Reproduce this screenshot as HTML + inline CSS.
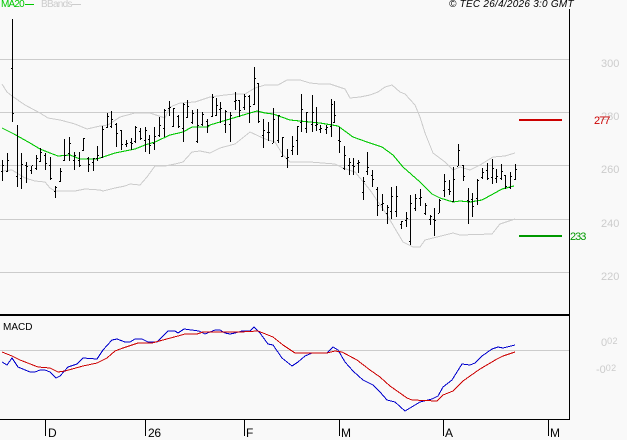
<!DOCTYPE html>
<html><head><meta charset="utf-8"><style>
html,body{margin:0;padding:0;background:#f9f9f9}
#c{position:relative;width:627px;height:440px;overflow:hidden;background:#f9f9f9;font-family:"Liberation Sans",sans-serif}
svg{position:absolute;left:0;top:0}
.t{position:absolute;font-size:11px;line-height:11px;white-space:nowrap}
.g{color:#ccc}
.k{color:#000}
.x{font-size:12px;letter-spacing:-.3px}
.s{position:relative;top:-2px;font-size:9px;letter-spacing:.4px}
</style></head><body><div id="c">
<svg width="627" height="440" shape-rendering="crispEdges" fill="none">
<path stroke="#ccc" d="M0 59.5H569M0 112.5H569M0 165.5H569M0 219.5H569M0 272.5H569M0 350.5H569"/>
<polyline stroke="#ccc" points="2,84 7,92 12,96 25,105 40,113 48,118 60,120 75,124 87,129 100,126 108,125 120,117 135,113 150,113 165,118 170,107 180,103 195,102 210,97 225,95 235,94 245,94 255,88 265,85 278,85 287,80 300,80 310,83 320,84 330,84 345,89 350,98 360,97 370,95 378,92 385,87 392,85 400,92 405,94 415,105 420,117 425,133 433,153 445,162 453,170 460,167 470,170 480,165 493,157 505,156 515,153"/>
<polyline stroke="#ccc" points="2,171 12,170 25,178 35,181 45,182 50,188 55,191 60,191 75,191 85,189 100,190 103,191 115,188 125,186 130,184 140,185 147,177 155,166 165,166 175,164 183,162 192,152 200,151 210,153 220,148 235,144 250,132 265,139 275,142 283,155 290,162 310,162 335,164 343,168 355,172 370,190 387,215 403,242 413,247 420,247 425,240 453,233 460,235 492,234 500,224 515,219"/>
<polyline stroke="#00c800" stroke-width="1.1" points="2,128 14,134 30,143 40,149 50,153 58,156 70,155 80,159 97,159 103,157 115,153 135,149 145,145 155,142 170,135 183,132 192,127 208,127 210,125 230,119 250,113 257,111 265,113 273,114 290,120 300,121 320,123 338,126 353,137 367,142 382,147 393,155 403,167 420,182 432,194 440,198 453,202 460,201 470,202 482,200 493,194 502,189 514,186"/>
<path stroke="#000" d="M2.5 160V181M1 171.5h1M3 165.5h1M7.5 153V172M6 171.5h1M8 160.5h1M12.5 19V122M11 68.5h1M13 113.5h1M17.5 125V187M16 176.5h1M21.5 153V189M20 178.5h1M22 164.5h1M26.5 162V183M25 165.5h1M27 166.5h1M31.5 166V174M30 170.5h1M32 165.5h1M36.5 155V170M35 168.5h1M37 158.5h1M40.5 148V162M39 161.5h1M41 152.5h1M45.5 153V170M44 155.5h1M46 163.5h1M50.5 157V180M49 165.5h1M51 178.5h1M55.5 186V198M54 191.5h1M56 187.5h1M60.5 168V182M59 181.5h1M61 171.5h1M64.5 139V161M63 160.5h1M65 155.5h1M69.5 137V161M68 153.5h1M70 143.5h1M74.5 152V170M73 160.5h1M75 155.5h1M79.5 152V167M78 160.5h1M80 165.5h1M83.5 138V151M82 150.5h1M84 138.5h1M88.5 157V172M87 158.5h1M89 164.5h1M93.5 158V171M92 162.5h1M94 158.5h1M97.5 146V161M96 158.5h1M98 155.5h1M102.5 126V158M101 157.5h1M103 129.5h1M107.5 113V128M106 127.5h1M108 116.5h1M111.5 111V128M110 126.5h1M112 119.5h1M116.5 123V147M115 124.5h1M117 133.5h1M121.5 130V150M120 130.5h1M122 144.5h1M126.5 140V147M125 144.5h1M127 143.5h1M131.5 138V150M130 142.5h1M132 143.5h1M135.5 126V143M134 141.5h1M136 127.5h1M140.5 128V140M139 131.5h1M141 138.5h1M145.5 127V152M144 140.5h1M146 130.5h1M149.5 135V154M148 139.5h1M150 145.5h1M154.5 127V150M153 143.5h1M155 136.5h1M159.5 117V137M158 135.5h1M160 125.5h1M164.5 109V137M163 128.5h1M165 110.5h1M169.5 101V116M168 108.5h1M170 107.5h1M173.5 108V127M172 126.5h1M174 108.5h1M178.5 115V128M177 116.5h1M179 126.5h1M183.5 103V142M182 128.5h1M184 104.5h1M187.5 100V118M186 117.5h1M188 106.5h1M192.5 110V124M191 122.5h1M193 113.5h1M197.5 109V143M196 141.5h1M198 125.5h1M202.5 112V126M201 124.5h1M203 114.5h1M207.5 119V133M206 121.5h1M208 125.5h1M212.5 94V117M211 116.5h1M213 97.5h1M216.5 98V116M215 115.5h1M217 105.5h1M220.5 102V123M219 109.5h1M221 108.5h1M225.5 110V133M224 124.5h1M226 111.5h1M230.5 112V142M229 124.5h1M231 115.5h1M235.5 92V110M234 101.5h1M236 100.5h1M239.5 100V117M238 100.5h1M240 110.5h1M244.5 94V110M243 107.5h1M245 96.5h1M249.5 95V123M248 96.5h1M250 106.5h1M254.5 67V105M253 104.5h1M255 78.5h1M258.5 83V123M257 83.5h1M259 121.5h1M263.5 119V148M262 135.5h1M264 130.5h1M268.5 122V141M267 132.5h1M269 132.5h1M273.5 108V143M272 143.5h1M274 119.5h1M278.5 115V143M277 140.5h1M279 115.5h1M282.5 137V157M281 156.5h1M283 137.5h1M287.5 149V168M286 158.5h1M288 157.5h1M292.5 136V155M291 150.5h1M293 146.5h1M297.5 126V155M296 140.5h1M298 126.5h1M301.5 94V132M300 122.5h1M302 109.5h1M306.5 112V133M305 128.5h1M307 112.5h1M312.5 95V132M311 124.5h1M313 112.5h1M316.5 107V131M315 125.5h1M317 124.5h1M320.5 125V133M319 129.5h1M321 128.5h1M326.5 125V134M325 129.5h1M327 127.5h1M331.5 99V137M330 126.5h1M332 104.5h1M334.5 101V123M333 122.5h1M335 115.5h1M339.5 127V153M338 140.5h1M340 141.5h1M344.5 146V170M343 168.5h1M345 155.5h1M349.5 158V175M348 165.5h1M350 162.5h1M353.5 158V175M352 165.5h1M354 166.5h1M358.5 160V173M357 163.5h1M359 162.5h1M363.5 177V200M362 192.5h1M364 181.5h1M367.5 152V175M366 171.5h1M368 167.5h1M372.5 170V187M371 175.5h1M373 179.5h1M377.5 187V216M376 189.5h1M378 205.5h1M382.5 194V211M381 204.5h1M383 203.5h1M387.5 205V224M386 213.5h1M388 207.5h1M391.5 187V219M390 211.5h1M392 196.5h1M396.5 186V217M395 211.5h1M397 196.5h1M401.5 221V229M400 224.5h1M402 221.5h1M406.5 212V227M405 220.5h1M407 218.5h1M410.5 195V245M409 241.5h1M411 203.5h1M415.5 194V211M414 208.5h1M416 198.5h1M420.5 189V206M419 198.5h1M421 197.5h1M425.5 203V215M424 213.5h1M426 205.5h1M430.5 215V225M429 219.5h1M431 216.5h1M434.5 208V236M433 219.5h1M435 220.5h1M439.5 199V213M438 213.5h1M440 200.5h1M444.5 174V197M443 190.5h1M445 181.5h1M449.5 180V195M448 189.5h1M450 191.5h1M453.5 167V202M452 201.5h1M454 179.5h1M458.5 144V166M457 166.5h1M459 150.5h1M463.5 165V181M462 165.5h1M464 176.5h1M468.5 188V224M467 200.5h1M469 201.5h1M472.5 193V217M471 199.5h1M473 206.5h1M477.5 179V205M476 198.5h1M478 180.5h1M482.5 168V179M481 177.5h1M483 172.5h1M487.5 163V180M486 170.5h1M488 178.5h1M492.5 159V184M491 177.5h1M493 168.5h1M496.5 169V183M495 178.5h1M497 176.5h1M501.5 164V180M500 178.5h1M502 171.5h1M505.5 175V189M504 175.5h1M506 186.5h1M510.5 172V189M509 187.5h1M511 176.5h1M515.5 164V180M514 179.5h1M516 169.5h1"/>
<polyline stroke="#00c" points="2,362 7,365 12,358 18,367 30,372 35,372 40,370 45,370 50,372 56,378 60,376 68,367 77,364 83,358 97,359 103,350 112,340 117,339 125,342 130,342 135,339 142,339 148,342 157,342 168,331 175,331 178,333 184,329 199,331 205,334 210,332 215,330 220,330 225,333 230,334 235,333 242,331 250,331 254,327 260,333 268,344 273,345 282,358 292,366 298,362 305,356 312,353 318,353 327,353 333,347 338,350 345,362 353,371 363,380 373,385 380,392 387,400 395,402 405,411 420,402 432,399 438,396 443,387 452,380 462,364 470,365 475,363 482,356 492,349 498,347 503,348 515,345"/>
<polyline stroke="#c00" points="2,352 12,356 20,360 38,367 50,368 58,372 65,371 83,366 97,363 107,358 115,351 123,348 138,343 152,343 163,340 178,336 185,334 197,334 203,332 210,332 227,332 240,332 258,331 273,337 283,345 295,353 327,353 335,351 342,352 357,360 370,370 380,377 390,386 407,398 412,400 437,401 443,395 453,391 463,381 470,376 480,369 497,359 503,356 515,352"/>
<rect x="0" y="314" width="569" height="2" fill="#000"/>
<rect x="569" y="9" width="1" height="411" fill="#000"/>
<rect x="0" y="419" width="569" height="1" fill="#000"/>
<path stroke="#000" d="M45.5 419V436M145.5 419V436M244.5 419V436M339.5 419V436M443.5 419V436M548.5 419V436"/>
<rect x="519" y="119" width="43" height="2" fill="#c00"/>
<rect x="519" y="235" width="43" height="2" fill="#090"/>
<path stroke="#00c800" d="M25 4.5H34"/>
<path stroke="#ccc" d="M72 4.5H81"/>
</svg>
<div class="t" style="left:1px;top:-1px;color:#00c800;font-size:10px;letter-spacing:-.8px">MA20</div>
<div class="t g" style="left:41px;top:-1px;font-size:10px;letter-spacing:-.7px">BBands</div>
<div class="t k" style="left:449px;top:-1px;font-size:10px;font-style:italic;letter-spacing:.25px">© TEC 26/4/2026 3:0 GMT</div>
<div class="t g" style="left:601px;top:59px">300</div>
<div class="t g" style="left:601px;top:112px">280</div>
<div class="t g" style="left:601px;top:165px">260</div>
<div class="t g" style="left:601px;top:219px">240</div>
<div class="t g" style="left:601px;top:272px">220</div>
<div class="t" style="left:594px;top:116px;color:#c00;letter-spacing:-1px">277</div>
<div class="t" style="left:570px;top:232px;color:#090;letter-spacing:-1px">233</div>
<div class="t g" style="left:601px;top:338px">0<span class="s">02</span></div>
<div class="t g" style="left:596px;top:365px">-0<span class="s">02</span></div>
<div class="t k" style="left:3px;top:322px;font-size:10px">MACD</div>
<div class="t k x" style="left:48px;top:428px">D</div>
<div class="t k x" style="left:148px;top:428px">26</div>
<div class="t k x" style="left:246px;top:428px">F</div>
<div class="t k x" style="left:341px;top:428px">M</div>
<div class="t k x" style="left:445px;top:428px">A</div>
<div class="t k x" style="left:550px;top:428px">M</div>
</div></body></html>
